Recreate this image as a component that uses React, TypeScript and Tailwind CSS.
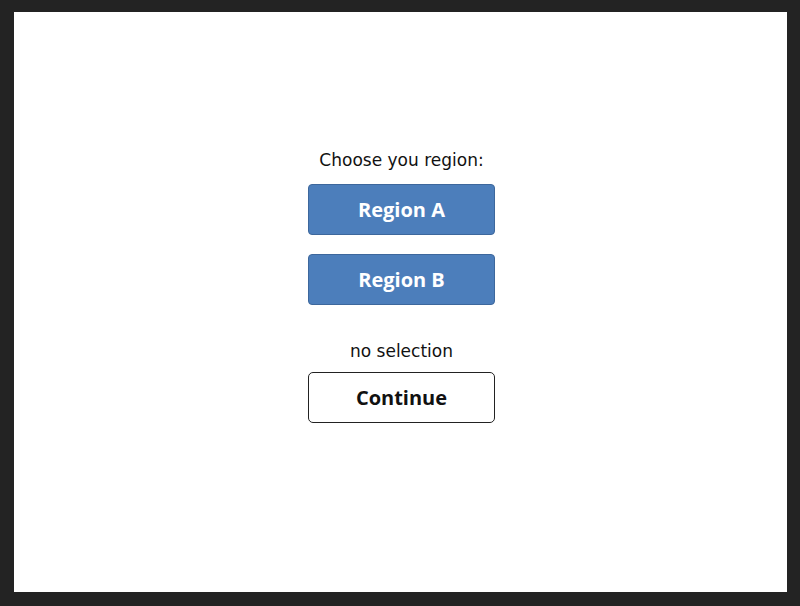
import { useState } from "react";

const regions = ["Region A", "Region B"];

export default function App() {
  const [selected, setSelected] = useState<string | null>(null);

  return (
    <div className="w-[800px] h-[606px] bg-[#232323] pt-[12px] pl-[14px]">
      <div className="w-[773px] h-[580px] bg-white flex flex-col items-center pt-[136px] pl-[2px]">
        <p className="text-[17px] leading-[24px] text-[#111] font-['DejaVu_Sans',sans-serif]">
          Choose you region:
        </p>
        <div className="mt-[12px] flex flex-col gap-[19px]">
          {regions.map((r) => (
            <button
              key={r}
              onClick={() => setSelected(r)}
              className="w-[187px] h-[51px] rounded-[4px] bg-[#4c7ebb] border border-[#3d679c] text-white text-[20px] font-bold font-['Open_Sans',sans-serif]"
            >
              {r}
            </button>
          ))}
        </div>
        <p className="mt-[34px] text-[17px] leading-[24px] text-[#111] font-['DejaVu_Sans',sans-serif]">
          {selected ?? "no selection"}
        </p>
        <button className="mt-[9px] w-[187px] h-[51px] rounded-[5px] bg-white border border-[#222] text-[#111] text-[20px] font-bold font-['Open_Sans',sans-serif]">
          Continue
        </button>
      </div>
    </div>
  );
}
